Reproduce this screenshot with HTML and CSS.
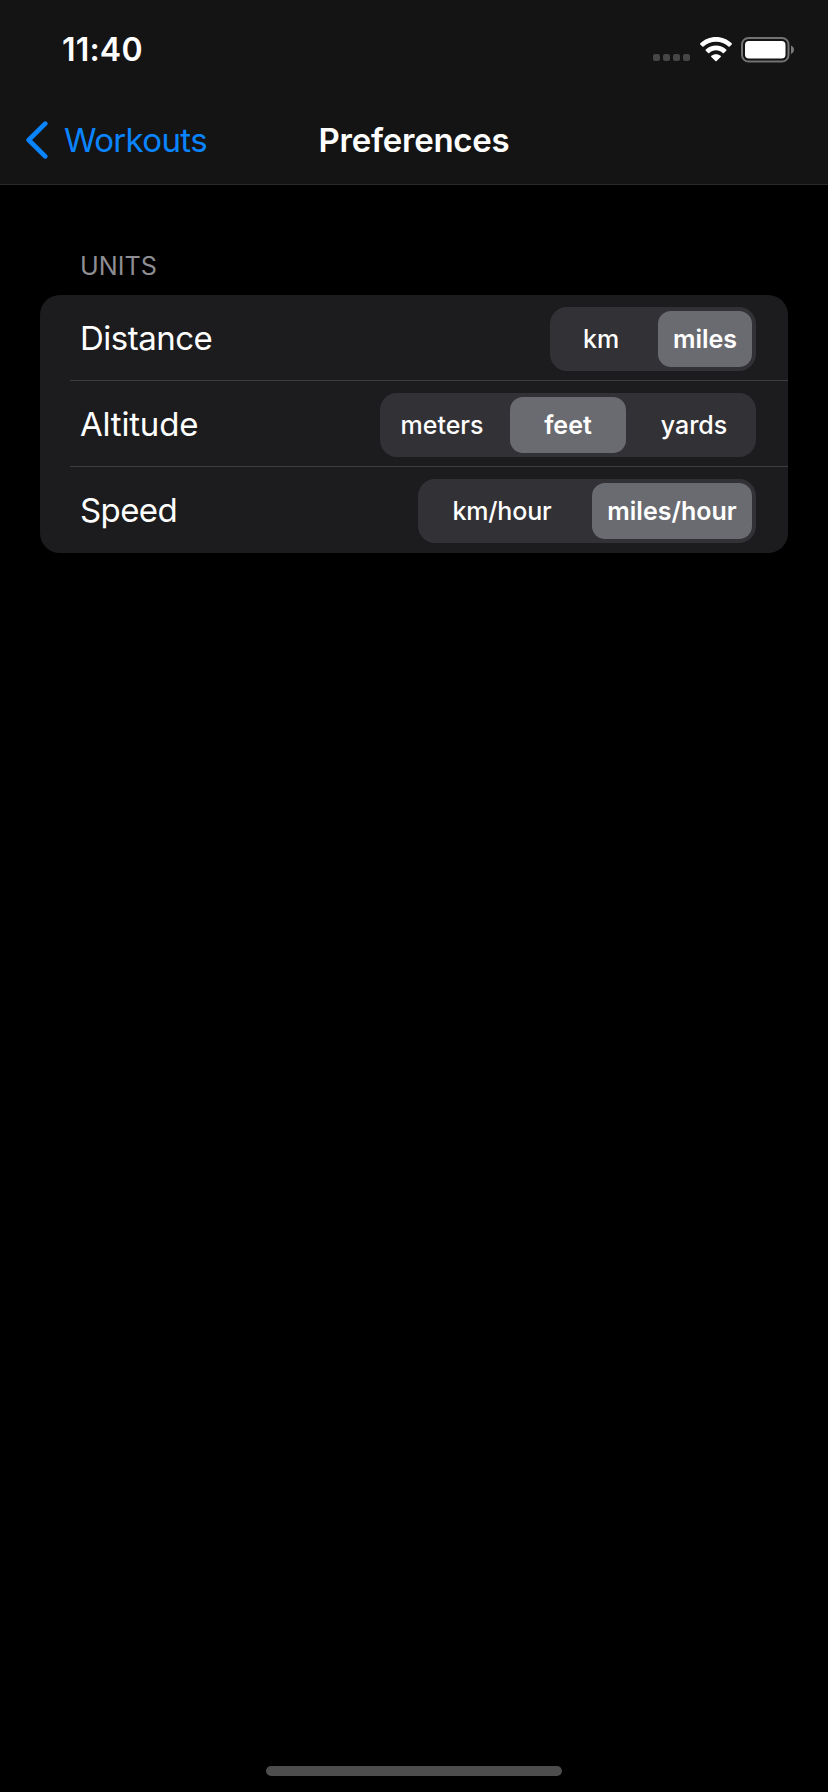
FILE: index.html
```html
<!DOCTYPE html>
<html lang="en">
<head>
<meta charset="utf-8">
<title>Preferences</title>
<link rel="stylesheet" href="styles.css">
</head>
<body>
<div class="screen">
  <header class="header">
    <div class="status">
      <span class="clock">11:40</span>
      <div class="indicators">
        <div class="cell"><i></i><i></i><i></i><i></i></div>
        <svg class="wifi" width="32" height="25" viewBox="0 0 32 25" fill="#fff">
          <path d="M16 0C9.9 0 4.300 2.400 .3 6.300Q-.2 6.900.3 7.500L2.300 9.500Q2.900 10 3.500 9.500C6.800 6.400 11.200 4.700 16 4.700S25.200 6.400 28.500 9.500Q29.100 10 29.700 9.500L31.700 7.500Q32.200 6.900 31.700 6.300C27.700 2.400 22.100 0 16 0Z"/>
          <path d="M16 8.600C12.200 8.600 8.500 10 5.800 12.500Q5.200 13.100 5.800 13.700L8.100 15.900Q8.700 16.400 9.300 15.900C11.100 14.200 13.500 13.300 16 13.300S20.900 14.200 22.700 15.900Q23.300 16.400 23.900 15.900L26.200 13.700Q26.800 13.100 26.200 12.500C23.500 10 19.800 8.600 16 8.600Z"/>
          <path d="M16 17.200C14.200 17.200 12.600 17.800 11.300 18.800Q10.700 19.400 11.300 20L15.400 24.100Q16 24.600 16.600 24.100L20.700 20Q21.300 19.400 20.700 18.800C19.400 17.800 17.800 17.200 16 17.200Z"/>
        </svg>
        <svg class="battery" width="54" height="26" viewBox="0 0 54 26">
          <rect x="1" y="1" width="46.500" height="23.500" rx="6.500" fill="none" stroke="#727272" stroke-width="2"/>
          <rect x="4" y="4" width="40.500" height="17.500" rx="4" fill="#fff"/>
          <path d="M50 8.500C51.800 9.200 53 10.900 53 12.800S51.800 16.300 50 17Z" fill="#7a7a7a"/>
        </svg>
      </div>
    </div>
    <nav class="nav">
      <a class="back">
        <svg class="chevron" width="24" height="40" viewBox="0 0 24 40"><path d="M21.200 3.700L4.700 20L21.200 36.300" fill="none" stroke="#0a84ff" stroke-width="4.700" stroke-linecap="round" stroke-linejoin="round"/></svg>
        <span class="back-label">Workouts</span>
      </a>
      <h1 class="title">Preferences</h1>
      <span></span>
    </nav>
  </header>
  <main class="content">
    <h2 class="section-title">UNITS</h2>
    <section class="card">
      <div class="row">
        <span class="label distance">Distance</span>
        <div class="segments two-short"><span class="km">km</span><b class="miles">miles</b></div>
      </div>
      <div class="row">
        <span class="label altitude">Altitude</span>
        <div class="segments three"><span class="meters">meters</span><b class="feet">feet</b><span class="yards">yards</span></div>
      </div>
      <div class="row">
        <span class="label speed">Speed</span>
        <div class="segments two-long"><span class="kmh">km/hour</span><b class="mph">miles/hour</b></div>
      </div>
    </section>
  </main>
  <footer class="footer"><div class="home-bar"></div></footer>
</div>
</body>
</html>
```
FILE: styles.css
```css
* { box-sizing: border-box; }
body {
  margin: 0;
  background: #000;
  color: #fff;
  font-family: Inter, "Liberation Sans", sans-serif;
}
.screen { width: 828px; height: 1792px; display: flex; flex-direction: column; }
.header { height: 185px; background: #141414; border-bottom: 1px solid #2a2a2a; }
.status {
  height: 96px;
  padding: 0 33px 0 62px;
  display: flex;
  justify-content: space-between;
}
.clock { font-size: 32px; font-weight: 600; line-height: 100px; letter-spacing: 0.2px; }
.indicators { display: flex; align-items: flex-start; padding-top: 37px; }
.cell { display: flex; gap: 3px; margin: 17px 10px 0 0; }
.cell i { width: 7px; height: 7px; border-radius: 2px; background: #464646; }
.wifi { margin-right: 9px; }
.nav {
  height: 88px;
  padding: 0 24px;
  display: grid;
  grid-template-columns: 1fr auto 1fr;
  align-items: center;
}
.back { display: flex; align-items: center; color: #0a84ff; }
.back-label { font-size: 33px; margin-left: 16px; letter-spacing: -0.65px; }
.title { margin: 0; font-size: 33px; font-weight: 600; letter-spacing: -0.25px; }
.content { flex: 1; padding: 0 40px; }
.section-title {
  margin: 0;
  height: 110px;
  padding: 65px 0 0 40px;
  font-size: 25.2px;
  line-height: 32px;
  font-weight: 400;
  color: #8d8d93;
}
.card { border-radius: 20px; background: #1c1c1e; overflow: hidden; }
.row {
  height: 86px;
  display: flex;
  align-items: center;
  justify-content: space-between;
  margin-left: 30px;
  padding: 0 32px 0 10px;
  border-bottom: 1px solid #3d3d41;
}
.row:last-child { border-bottom-color: transparent; }
.label { font-size: 33px; letter-spacing: -0.5px; }
.altitude { letter-spacing: -0.2px; }
.speed { letter-spacing: -0.6px; }
.segments {
  height: 64px;
  margin-top: 3px;
  padding: 4px;
  display: grid;
  gap: 10px;
  border-radius: 17px;
  background: #323136;
  font-size: 25px;
}
.segments > * {
  display: flex;
  align-items: center;
  justify-content: center;
  border-radius: 13px;
  font-weight: 500;
}
.segments b { font-weight: 600; background: #6a6b70; }
.two-short { grid-template-columns: repeat(2, 94px); }
.three { grid-template-columns: repeat(3, 116px); }
.two-long { grid-template-columns: repeat(2, 160px); }
.kmh { letter-spacing: -0.15px; }
.footer { height: 26px; display: flex; justify-content: center; }
.home-bar { width: 296px; height: 10px; border-radius: 5px; background: #4d4d4d; }
```
